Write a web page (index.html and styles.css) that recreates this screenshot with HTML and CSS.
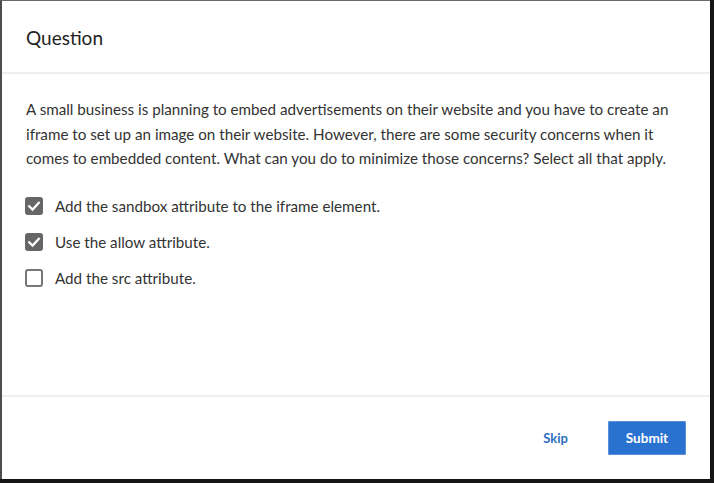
FILE: index.html
```html
<!DOCTYPE html>
<html lang="en">
<head>
<meta charset="utf-8">
<title>Question</title>
<link rel="stylesheet" href="styles.css">
</head>
<body>
<div class="modal">
  <header class="modal-header">
    <h1 class="title">Question</h1>
  </header>
  <main class="modal-body">
    <p class="prompt">A small business is planning to embed advertisements on their website and you have to create an iframe to set up an image on their website. However, there are some security concerns when it comes to embedded content. What can you do to minimize those concerns? Select all that apply.</p>
    <ul class="options">
      <li class="option">
        <span class="box checked"><svg viewBox="0 0 18 18" width="18" height="18"><path d="M4.2 9.3 L7.6 12.6 L13.8 5.8" fill="none" stroke="#fff" stroke-width="2.2" stroke-linecap="square"/></svg></span>
        <span class="label">Add the sandbox attribute to the iframe element.</span>
      </li>
      <li class="option">
        <span class="box checked"><svg viewBox="0 0 18 18" width="18" height="18"><path d="M4.2 9.3 L7.6 12.6 L13.8 5.8" fill="none" stroke="#fff" stroke-width="2.2" stroke-linecap="square"/></svg></span>
        <span class="label">Use the allow attribute.</span>
      </li>
      <li class="option">
        <span class="box"></span>
        <span class="label">Add the src attribute.</span>
      </li>
    </ul>
  </main>
  <footer class="modal-footer">
    <button class="btn-link" type="button">Skip</button>
    <button class="btn-primary" type="button">Submit</button>
  </footer>
</div>
</body>
</html>
```

FILE: styles.css
```css
* { box-sizing: border-box; }
html, body { margin: 0; padding: 0; }
body {
  background: #151515;
  width: 714px;
  height: 483px;
  overflow: hidden;
  font-family: "Lato", "Open Sans", sans-serif;
  color: #333;
}
.modal {
  width: 710px;
  height: 479px;
  background: #fff;
  border-top: 1px solid #6b6b6b;
  border-left: 2px solid #4d4d4d;
  display: flex;
  flex-direction: column;
}
.modal-header {
  height: 73px;
  border-bottom: 2px solid #eeeeee;
  padding: 0 24px;
  display: flex;
  align-items: center;
}
.title {
  margin: 0;
  font-size: 19px;
  font-weight: 400;
  color: #222;
  padding-top: 2px;
}
.modal-body {
  flex: 1;
  padding: 23px 24px 0 24px;
}
.prompt {
  margin: 0;
  font-size: 15.2px;
  line-height: 24.5px;
  color: #333;
}
.options {
  list-style: none;
  margin: 26px 0 0 -1px;
  padding: 0;
  display: flex;
  flex-direction: column;
  gap: 18px;
}
.option {
  display: flex;
  align-items: center;
  gap: 12px;
  height: 18px;
  font-size: 15.2px;
  color: #333;
}
.box {
  width: 18px;
  height: 18px;
  border-radius: 3px;
  border: 2px solid #777;
  background: #fff;
  flex: none;
  display: flex;
  align-items: center;
  justify-content: center;
}
.box.checked {
  background: #666;
  border: none;
}
.box svg { display: block; }
.modal-footer {
  height: 84px;
  border-top: 2px solid #eeeeee;
  padding: 0 24px;
  display: flex;
  align-items: center;
  justify-content: flex-end;
  gap: 40px;
}
.btn-link {
  background: none;
  border: none;
  padding: 0;
  font-family: inherit;
  font-size: 13px;
  font-weight: 700;
  color: #2d6fc2;
}
.btn-primary {
  width: 78px;
  height: 34px;
  background: #2a72cf;
  border: 1px solid #5b8fd6;
  border-radius: 1px;
  color: #fff;
  font-family: inherit;
  font-size: 13.5px;
  font-weight: 700;
  padding: 0;
}
```
